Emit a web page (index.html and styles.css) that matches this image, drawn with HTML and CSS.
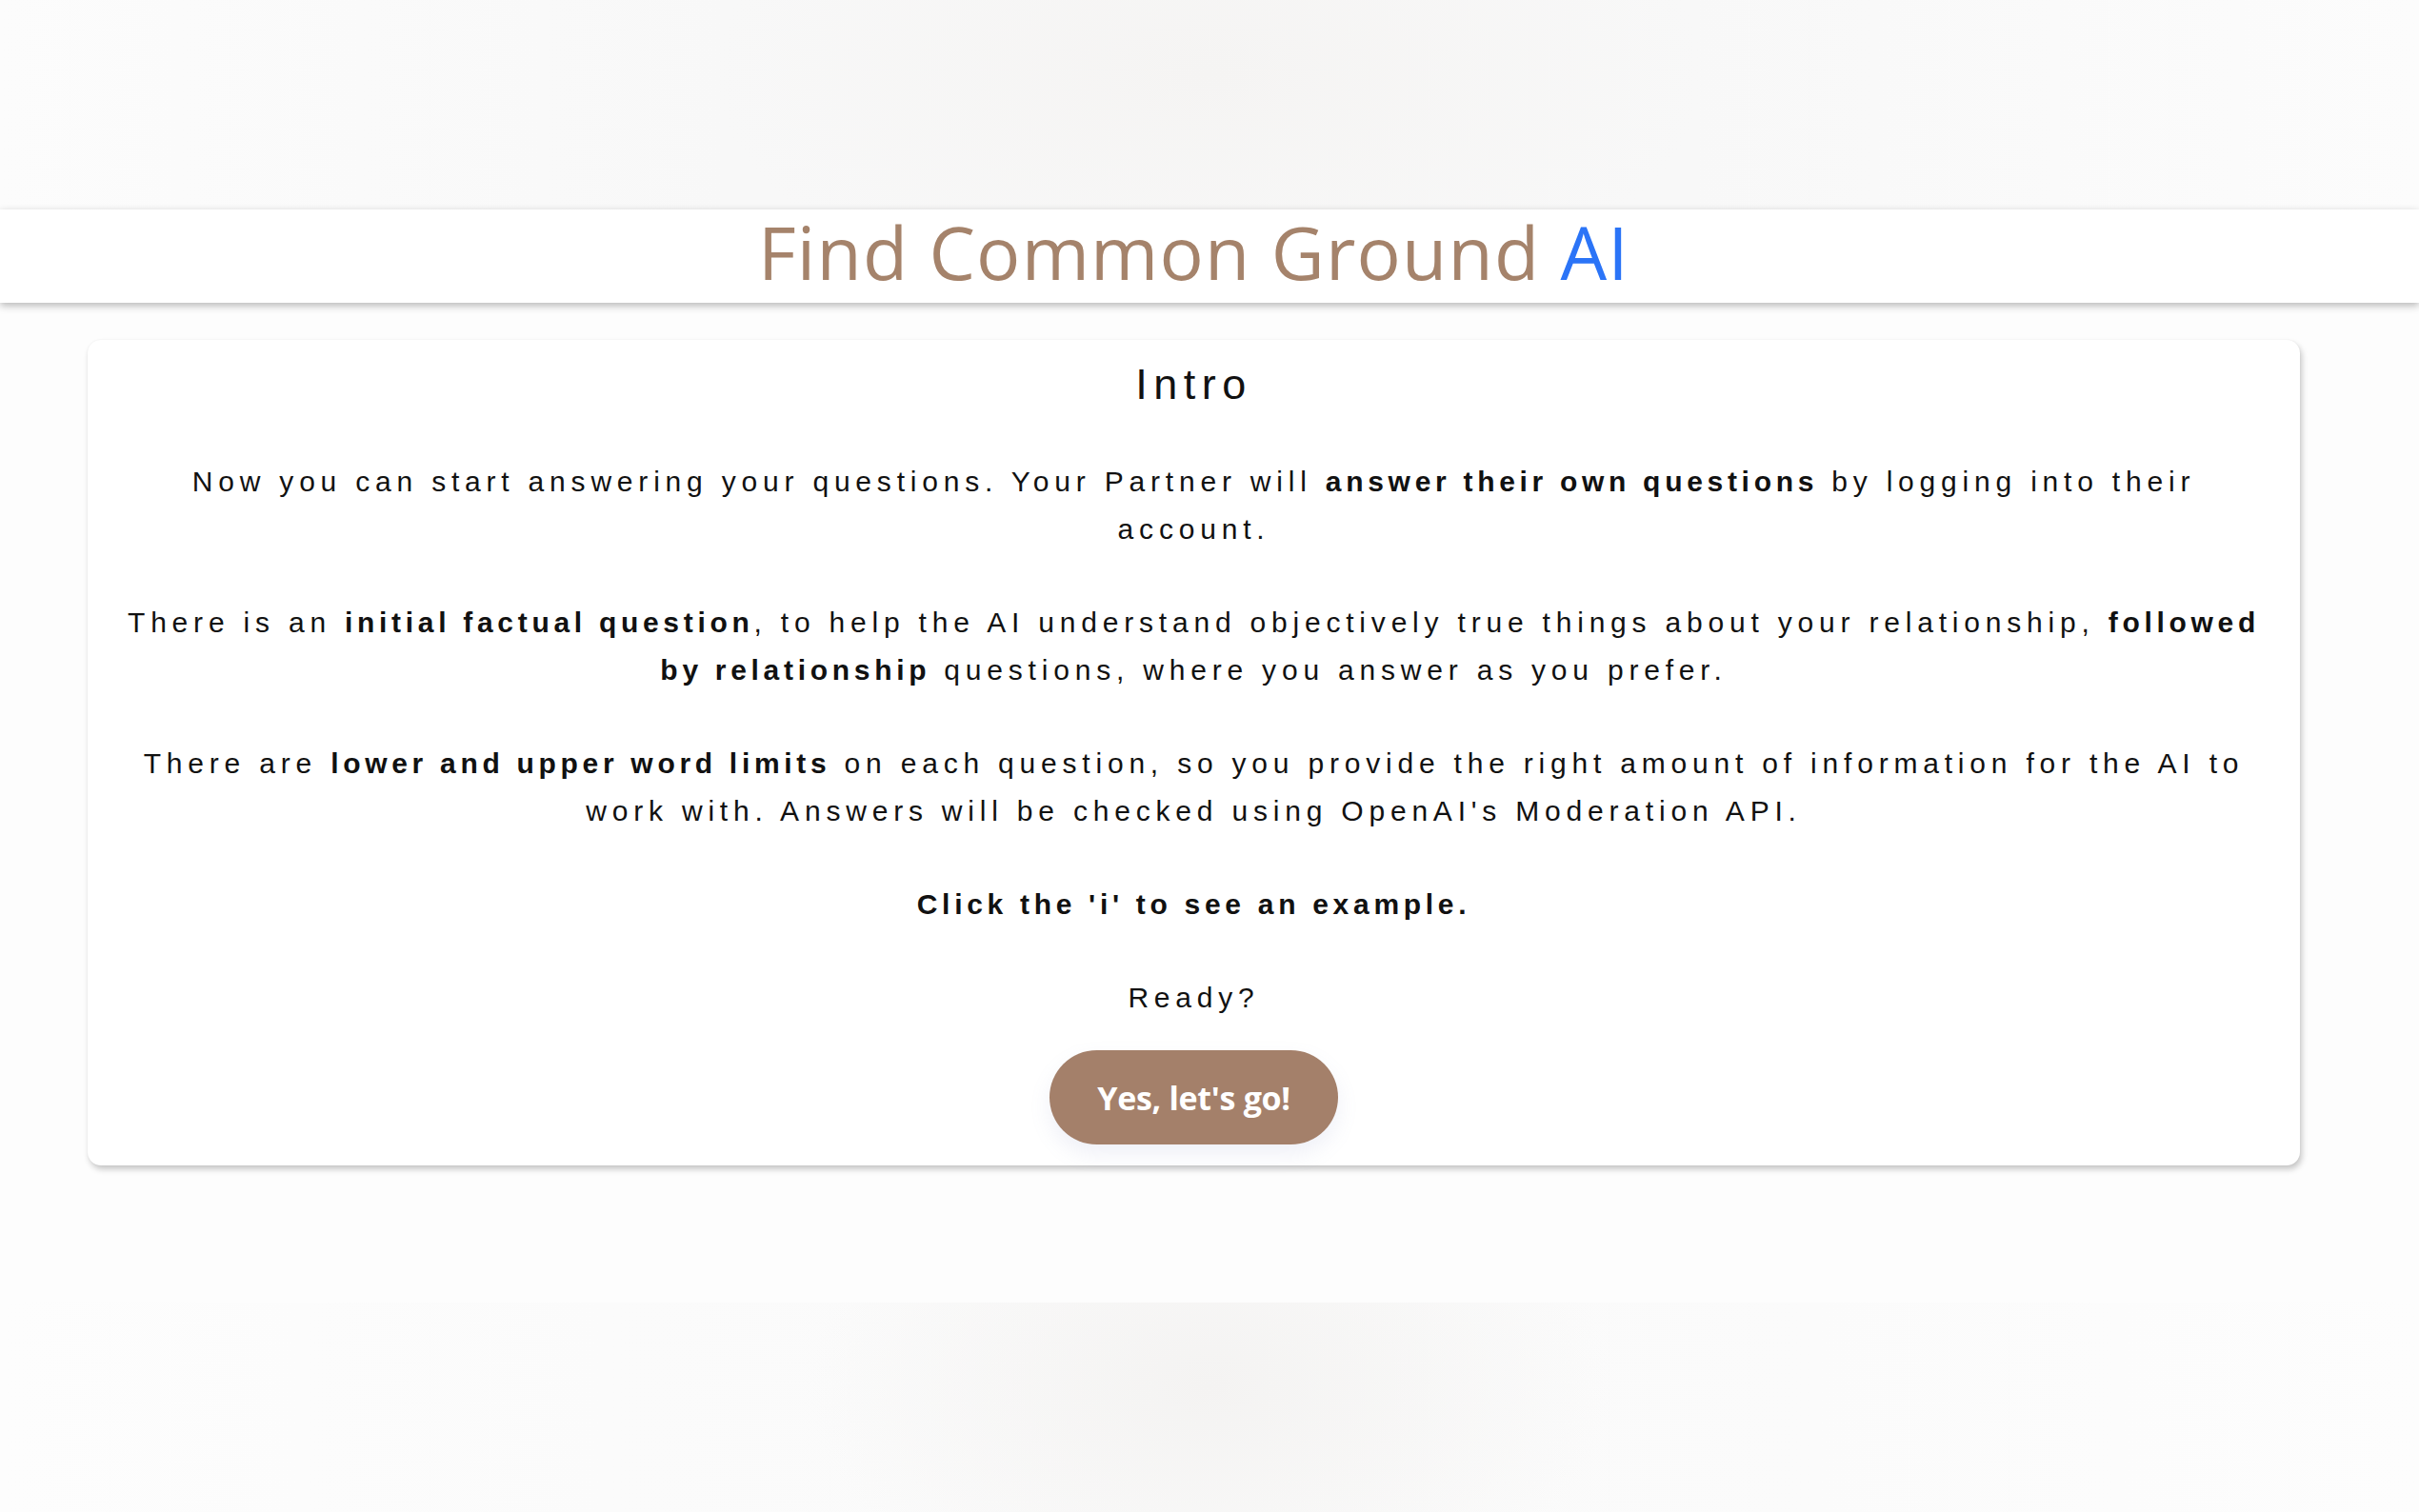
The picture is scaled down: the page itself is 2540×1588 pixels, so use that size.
FILE: index.html
```html
<!DOCTYPE html>
<html lang="en">
<head>
<meta charset="utf-8">
<title>Find Common Ground AI</title>
<link rel="stylesheet" href="styles.css">
</head>
<body>
<div class="band band-top"></div>
<div class="page">
  <header class="site-header">
    <h1 class="brand">Find Common Ground <span class="brand-ai">AI</span></h1>
  </header>
  <main class="main">
    <section class="card">
      <h2 class="card-title">Intro</h2>
      <p class="para">Now you can start answering your questions. Your Partner will <b>answer their own questions</b> by logging into their account.</p>
      <p class="para">There is an <b>initial factual question</b>, to help the AI understand objectively true things about your relationship, <b>followed by relationship</b> questions, where you answer as you prefer.</p>
      <p class="para">There are <b>lower and upper word limits</b> on each question, so you provide the right amount of information for the AI to work with. Answers will be checked using OpenAI's Moderation API.</p>
      <p class="para"><b>Click the 'i' to see an example.</b></p>
      <p class="para para-ready">Ready?</p>
      <button class="go-btn" type="button">Yes, let's go!</button>
    </section>
  </main>
</div>
<div class="band band-bottom"></div>
</body>
</html>
```

FILE: styles.css
```css
* { box-sizing: border-box; }
html, body {
  margin: 0;
  padding: 0;
}
body {
  width: 2540px;
  height: 1588px;
  overflow: hidden;
  background: #fdfdfd;
  font-family: "Liberation Sans", Arial, sans-serif;
  display: flex;
  flex-direction: column;
}
.band {
  height: 220px;
  flex: none;
}
.band-top {
  background:
    radial-gradient(ellipse 520px 260px at 50% 35%, #f5f4f3 0%, rgba(246,245,244,0) 100%),
    linear-gradient(90deg, #fcfcfc 0%, #f8f8f8 30%, #f8f8f8 70%, #fcfcfc 100%);
}
.band-bottom {
  background:
    radial-gradient(ellipse 420px 260px at 50% 40%, #f4f3f2 0%, rgba(246,245,244,0) 100%),
    linear-gradient(90deg, #fdfdfd 0%, #fbfbfb 25%, #fafafa 50%, #fbfbfb 75%, #fdfdfd 100%);
}
.page {
  height: 1148px;
  flex: none;
  background: #fdfdfd;
  display: flex;
  flex-direction: column;
}
.site-header {
  height: 98px;
  background: #ffffff;
  box-shadow: 0 3px 8px rgba(0,0,0,0.28);
  display: flex;
  justify-content: center;
  align-items: center;
  padding-right: 33px;
  position: relative;
  z-index: 1;
}
.brand {
  margin: 0;
  font-family: "Open Sans", "Noto Sans", sans-serif;
  font-weight: 500;
  font-size: 77px;
  line-height: 1;
  letter-spacing: 1.2px;
  color: #a5836b;
  padding-bottom: 10px;
}
.brand-ai { color: #2b74f7; }
.main {
  padding: 39px 33px 0 0;
  display: flex;
  justify-content: center;
}
.card {
  width: 2323px;
  background: #ffffff;
  border-radius: 14px;
  box-shadow: 2px 4px 6px rgba(0,0,0,0.22), 0 0 2px rgba(0,0,0,0.06);
  padding: 20px 36px 22px;
  display: flex;
  flex-direction: column;
  align-items: center;
  text-align: center;
  color: #111111;
}
.card-title {
  margin: 0 0 50px;
  font-size: 45px;
  line-height: 54px;
  font-weight: 400;
  letter-spacing: 6.5px;
}
.para {
  margin: 0 0 48px;
  font-size: 30px;
  line-height: 50px;
  letter-spacing: 5.8px;
}
.para b {
  font-weight: 700;
  letter-spacing: 4.7px;
}
.para-ready { margin-bottom: 30px; }
.go-btn {
  width: 303px;
  height: 99px;
  border: none;
  border-radius: 50px;
  background: #a4806a;
  color: #ffffff;
  font-family: "Open Sans", "Noto Sans", sans-serif;
  font-weight: 700;
  font-size: 34px;
  letter-spacing: -0.3px;
  box-shadow: 0 10px 22px rgba(120,130,190,0.12);
  cursor: pointer;
}
```
